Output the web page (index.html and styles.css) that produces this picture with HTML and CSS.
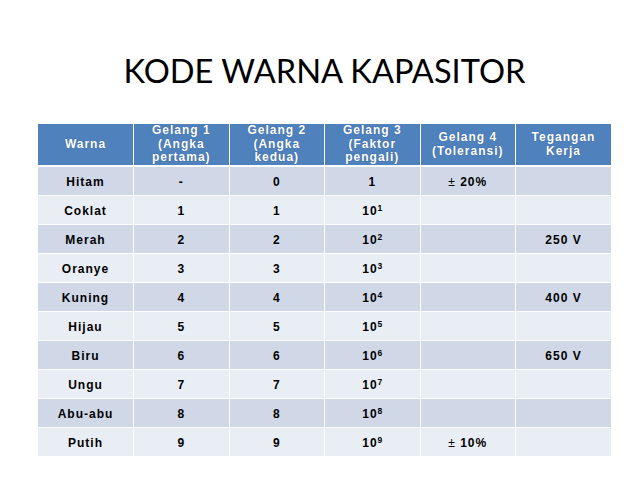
FILE: index.html
```html
<!DOCTYPE html>
<html>
<head>
<meta charset="utf-8">
<link rel="stylesheet" href="styles.css">
</head>
<body>
<div class="slide">
  <h1 class="title">KODE WARNA KAPASITOR</h1>
  <table class="kode">
    <thead>
      <tr>
        <th><span class="hd">Warna</span></th>
        <th><span class="hd">Gelang 1<br>(Angka<br>pertama)</span></th>
        <th><span class="hd">Gelang 2<br>(Angka<br>kedua)</span></th>
        <th><span class="hd">Gelang 3<br>(Faktor<br>pengali)</span></th>
        <th><span class="hd">Gelang 4<br>(Toleransi)</span></th>
        <th><span class="hd">Tegangan<br>Kerja</span></th>
      </tr>
    </thead>
    <tbody>
      <tr class="odd"><td>Hitam</td><td>-</td><td>0</td><td>1</td><td><span class="pm">±</span> 20%</td><td></td></tr>
      <tr class="even"><td>Coklat</td><td>1</td><td>1</td><td>10<sup>1</sup></td><td></td><td></td></tr>
      <tr class="odd"><td>Merah</td><td>2</td><td>2</td><td>10<sup>2</sup></td><td></td><td>250 V</td></tr>
      <tr class="even"><td>Oranye</td><td>3</td><td>3</td><td>10<sup>3</sup></td><td></td><td></td></tr>
      <tr class="odd"><td>Kuning</td><td>4</td><td>4</td><td>10<sup>4</sup></td><td></td><td>400 V</td></tr>
      <tr class="even"><td>Hijau</td><td>5</td><td>5</td><td>10<sup>5</sup></td><td></td><td></td></tr>
      <tr class="odd"><td>Biru</td><td>6</td><td>6</td><td>10<sup>6</sup></td><td></td><td>650 V</td></tr>
      <tr class="even"><td>Ungu</td><td>7</td><td>7</td><td>10<sup>7</sup></td><td></td><td></td></tr>
      <tr class="odd"><td>Abu-abu</td><td>8</td><td>8</td><td>10<sup>8</sup></td><td></td><td></td></tr>
      <tr class="even"><td>Putih</td><td>9</td><td>9</td><td>10<sup>9</sup></td><td><span class="pm">±</span> 10%</td><td></td></tr>
    </tbody>
  </table>
</div>
</body>
</html>
```
FILE: styles.css
```css
html, body {
  margin: 0;
  padding: 0;
  background: #ffffff;
}
.slide {
  width: 627px;
  height: 479px;
  padding-left: 11px;
  display: flex;
  flex-direction: column;
  align-items: center;
  overflow: hidden;
}
.title {
  margin: 51px 0 0 0;
  height: 40px;
  font-family: Lato, "Open Sans", sans-serif;
  font-weight: 400;
  font-size: 32.6px;
  line-height: 40px;
  color: #000000;
  letter-spacing: 0;
  white-space: nowrap;
}
.kode {
  margin-top: 32px;
  width: 573px;
  table-layout: fixed;
  border-collapse: collapse;
  font-family: "Liberation Sans", Arial, sans-serif;
  font-weight: 700;
  font-size: 12px;
  letter-spacing: 1px;
  color: #000000;
}
.kode th, .kode td {
  border: 1px solid #ffffff;
  text-align: center;
  padding: 0;
  vertical-align: middle;
}
.kode th {
  height: 41px;
  background: #4f81bd;
  color: #ffffff;
  border-bottom: 2px solid #ffffff;
  font-size: 12px;
  line-height: 13.5px;
  overflow: hidden;
}
.kode th .hd {
  display: block;
  max-height: 41px;
  overflow: hidden;
  text-shadow: 0 0 1px rgba(40, 60, 100, 0.6);
}
.kode td {
  height: 27px;
  padding-top: 1px;
}
.kode tr.odd td {
  background: #d0d8e8;
}
.kode tr.even td {
  background: #e9edf4;
}
.kode tbody tr:first-child td {
  border-top: none;
}
.kode sup {
  font-size: 8.5px;
  line-height: 0;
  vertical-align: 4px;
  letter-spacing: 0;
}
.kode .pm {
  font-weight: 400;
}
.kode th:first-child, .kode td:first-child {
  border-left: none;
}
.kode th:last-child, .kode td:last-child {
  border-right: none;
}
```
